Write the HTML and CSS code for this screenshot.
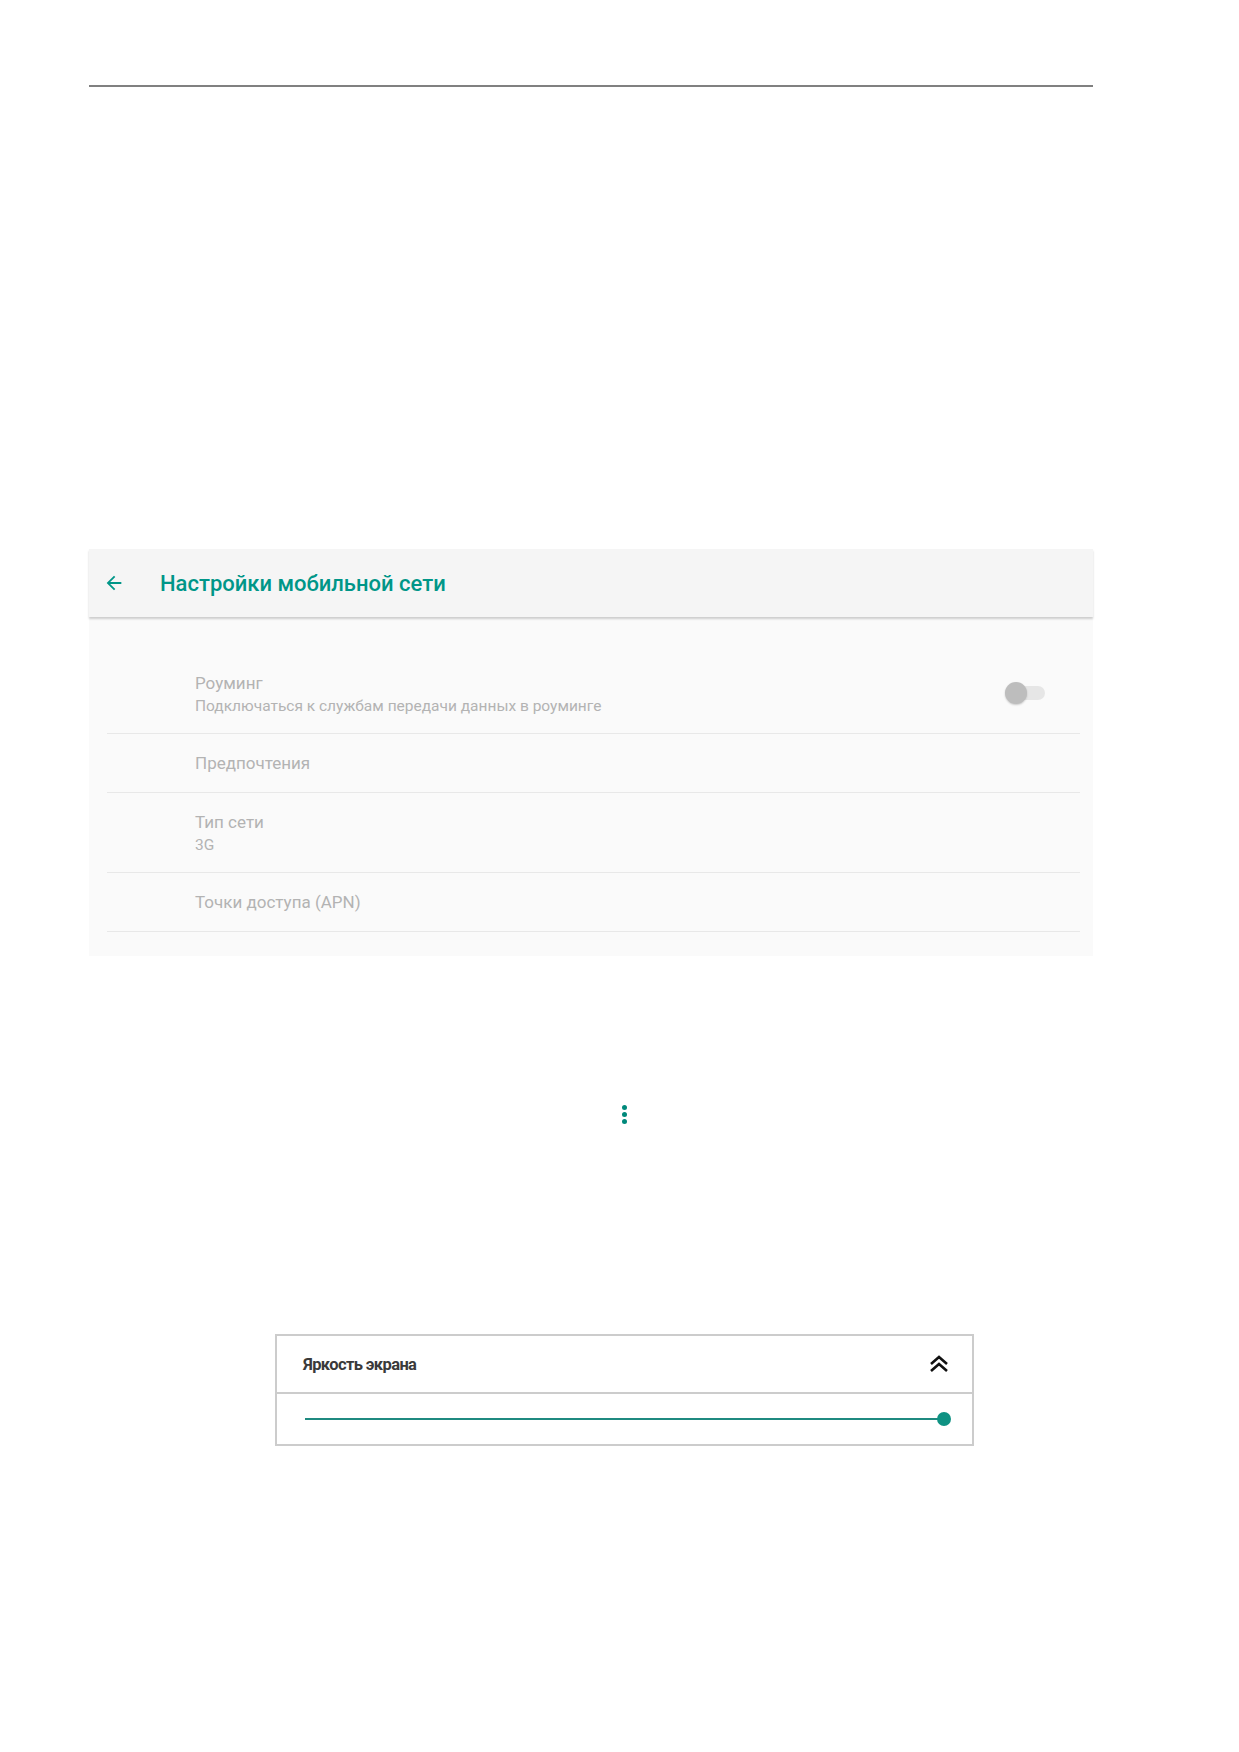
FILE: index.html
```html
<!DOCTYPE html>
<html lang="ru">
<head>
    <meta charset="UTF-8">
    <title>Настройки мобильной сети</title>
    <link rel="stylesheet" href="styles.css">
</head>
<body>
    <div class="page">
        <div class="rule"></div>

        <section class="settings">
            <header class="appbar">
                <svg class="back" viewBox="0 0 24 24" width="22" height="22">
                    <path d="M20 11H7.83l5.59-5.59L12 4l-8 8 8 8 1.41-1.41L7.83 13H20v-2z" fill="currentColor"/>
                </svg>
                <h1 class="appbar-title">Настройки мобильной сети</h1>
            </header>

            <ul class="pref-list">
                <li class="pref pref-two">
                    <div class="pref-text">
                        <div class="pref-title">Роуминг</div>
                        <div class="pref-summary">Подключаться к службам передачи данных в роуминге</div>
                    </div>
                    <div class="switch"><span class="switch-thumb"></span></div>
                </li>
                <li class="pref">
                    <div class="pref-text">
                        <div class="pref-title">Предпочтения</div>
                    </div>
                </li>
                <li class="pref pref-two">
                    <div class="pref-text">
                        <div class="pref-title">Тип сети</div>
                        <div class="pref-summary">3G</div>
                    </div>
                </li>
                <li class="pref">
                    <div class="pref-text">
                        <div class="pref-title">Точки доступа (APN)</div>
                    </div>
                </li>
            </ul>
        </section>

        <div class="menu-dots">
            <span></span><span></span><span></span>
        </div>

        <section class="brightness">
            <div class="brightness-head">
                <span class="brightness-title">Яркость экрана</span>
                <svg class="chevrons" viewBox="0 0 22 20" width="22" height="20">
                    <path d="M3 10 L11 3 L19 10 M3 17 L11 10 L19 17" fill="none" stroke="#111" stroke-width="2.6"/>
                </svg>
            </div>
            <div class="brightness-body">
                <div class="slider">
                    <div class="slider-track"></div>
                    <span class="slider-thumb"></span>
                </div>
            </div>
        </section>
    </div>
</body>
</html>
```

FILE: styles.css
```css
* {
    margin: 0;
    padding: 0;
    box-sizing: border-box;
}

body {
    background: #fff;
    font-family: Roboto, 'Noto Sans', sans-serif;
}

.page {
    width: 1004px;
    margin-left: 89px;
    padding-top: 85px;
}

.rule {
    height: 2px;
    background: #808080;
}

/* экран настроек */
.settings {
    margin-top: 462px;
    background: #fafafa;
}

.appbar {
    height: 68px;
    background: #f5f5f5;
    display: flex;
    align-items: center;
    padding-left: 14px;
    box-shadow: 0 2px 2px rgba(0, 0, 0, 0.18);
    position: relative;
}

.back {
    color: #009688;
    display: block;
}

.appbar-title {
    margin-left: 35px;
    font-size: 22px;
    font-weight: 500;
    color: #009688;
}

.pref-list {
    list-style: none;
    padding: 37px 13px 24px 18px;
}

.pref {
    height: 59px;
    display: flex;
    align-items: center;
    border-bottom: 1px solid #e8e8e8;
    padding-left: 88px;
    padding-right: 35px;
}

.pref-two {
    height: 80px;
}

.pref-text {
    flex: 1;
}

.pref-title {
    font-size: 17px;
    color: #b3b3b3;
    line-height: 24px;
}

.pref-summary {
    font-size: 15.5px;
    color: #b3b3b3;
    line-height: 22px;
}

.switch {
    width: 36px;
    height: 14px;
    border-radius: 7px;
    background: #e6e6e6;
    position: relative;
    margin-top: -2px;
}

.switch-thumb {
    position: absolute;
    left: -4px;
    top: -4px;
    width: 22px;
    height: 22px;
    border-radius: 50%;
    background: #bdbdbd;
    box-shadow: 0 1px 2px rgba(0, 0, 0, 0.2);
}

/* меню */
.menu-dots {
    width: 6px;
    margin: 149px 0 0 533px;
    display: flex;
    flex-direction: column;
    gap: 2px;
}

.menu-dots span {
    width: 5px;
    height: 5px;
    border-radius: 50%;
    background: #00897b;
}

/* яркость */
.brightness {
    width: 699px;
    margin: 210px 0 0 186px;
    border: 2px solid #cccccc;
    background: #fff;
}

.brightness-head {
    height: 58px;
    display: flex;
    align-items: center;
    justify-content: space-between;
    padding: 0 22px 0 26px;
    border-bottom: 2px solid #cccccc;
}

.brightness-title {
    font-size: 16.5px;
    font-weight: 700;
    color: #3a3a3a;
    letter-spacing: -0.6px;
}

.brightness-body {
    height: 50px;
    display: flex;
    align-items: center;
    padding: 0 27px 0 28px;
}

.slider {
    flex: 1;
    position: relative;
    height: 14px;
    display: flex;
    align-items: center;
}

.slider-track {
    flex: 1;
    height: 2px;
    background: #1f8a80;
}

.slider-thumb {
    position: absolute;
    right: -6px;
    top: 0;
    width: 14px;
    height: 14px;
    border-radius: 50%;
    background: #0f9283;
}
```
